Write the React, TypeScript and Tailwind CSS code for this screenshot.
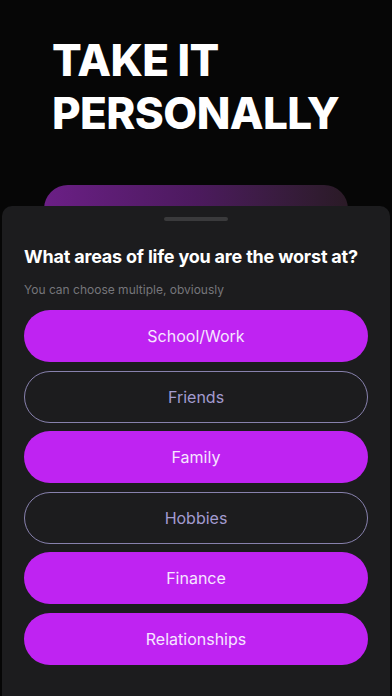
const options = [
  { label: "School/Work", selected: true },
  { label: "Friends", selected: false },
  { label: "Family", selected: true },
  { label: "Hobbies", selected: false },
  { label: "Finance", selected: true },
  { label: "Relationships", selected: true },
];

export default function App() {
  return (
    <div className="w-[392px] h-[696px] overflow-hidden bg-[#060606] flex flex-col font-['Inter',sans-serif]">
      <h1 className="pt-[34px] pl-[52px] text-white text-[44px] leading-[53px] font-extrabold tracking-[-0.6px]">
        TAKE IT
        <br />
        PERSONALLY
      </h1>

      {/* card peeking behind the sheet */}
      <div className="mt-[45px] mx-[44px] h-[44px] rounded-t-[24px] bg-gradient-to-r from-[#6b1f86] via-[#4c1a5e] to-[#2a1a26]" />

      <div className="relative -mt-[23px] mx-[2px] flex-1 rounded-t-[10px] bg-[#1c1c1e] px-[22px]">
        <div className="mx-auto mt-[11px] h-[4px] w-[64px] rounded-full bg-[#3a3a3c]" />
        <h2 className="mt-[24px] text-white text-[18px] leading-[24px] font-bold tracking-[-0.2px]">
          What areas of life you are the worst at?
        </h2>
        <p className="mt-[12px] text-[#76767b] text-[12px] leading-[18px]">
          You can choose multiple, obviously
        </p>
        <div className="mt-[11px] flex flex-col gap-[8.5px]">
          {options.map((o) =>
            o.selected ? (
              <button
                key={o.label}
                className="h-[52px] w-full rounded-full bg-[#bf23f2] text-[#f6e6ff] text-[16px]"
              >
                {o.label}
              </button>
            ) : (
              <button
                key={o.label}
                className="h-[52px] w-full rounded-full border border-[#8781ad] text-[#a39bd0] text-[16px]"
              >
                {o.label}
              </button>
            )
          )}
        </div>
      </div>
    </div>
  );
}
